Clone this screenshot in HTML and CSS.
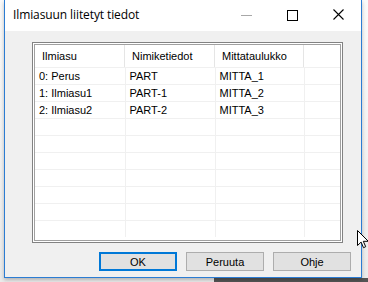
FILE: index.html
```html
<!DOCTYPE html>
<html lang="fi">
<head>
<meta charset="UTF-8" />
<title>Ilmiasuun liitetyt tiedot</title>
<link rel="stylesheet" href="styles.css">
</head>
<body>
<div class="desk">
  <div class="window">
    <div class="titlebar">
      <span class="title">Ilmiasuun liitetyt tiedot</span>
      <div class="caption">
        <span class="cap-btn min"><svg width="11" height="11" viewBox="0 0 11 11"><path d="M0 5.5h11" stroke="#a8a8a8" stroke-width="1"/></svg></span>
        <span class="cap-btn max"><svg width="11" height="11" viewBox="0 0 11 11"><rect x="0.5" y="0.5" width="10" height="10" fill="none" stroke="#000" stroke-width="1"/></svg></span>
        <span class="cap-btn close"><svg width="11" height="11" viewBox="0 0 11 11"><path d="M0.5 0.5l10 10M10.5 0.5l-10 10" stroke="#000" stroke-width="1.1"/></svg></span>
      </div>
    </div>
    <div class="client">
      <div class="listview">
        <div class="list-inner">
          <table class="grid">
            <thead>
              <tr><th>Ilmiasu</th><th>Nimiketiedot</th><th>Mittataulukko</th><th></th></tr>
            </thead>
            <tbody>
              <tr><td>0: Perus</td><td>PART</td><td>MITTA_1</td><td></td></tr>
              <tr><td>1: Ilmiasu1</td><td>PART-1</td><td>MITTA_2</td><td></td></tr>
              <tr><td>2: Ilmiasu2</td><td>PART-2</td><td>MITTA_3</td><td></td></tr>
              <tr><td></td><td></td><td></td><td></td></tr>
              <tr><td></td><td></td><td></td><td></td></tr>
              <tr><td></td><td></td><td></td><td></td></tr>
              <tr><td></td><td></td><td></td><td></td></tr>
              <tr><td></td><td></td><td></td><td></td></tr>
              <tr><td></td><td></td><td></td><td></td></tr>
              <tr><td></td><td></td><td></td><td></td></tr>
            </tbody>
          </table>
        </div>
      </div>
      <div class="buttons">
        <button class="btn default">OK</button>
        <button class="btn">Peruuta</button>
        <button class="btn">Ohje</button>
      </div>
    </div>
  </div>
  <div class="taskbar-edge"></div>
  <svg class="cursor" width="12" height="19" viewBox="0 0 12 19"><path d="M0.5 0.5v15l3.6-3.4 2.4 5.6 2.2-1-2.4-5.4h5z" fill="#fff" stroke="#000" stroke-width="1" stroke-linejoin="miter"/></svg>
</div>
</body>
</html>
```

FILE: styles.css
```css
:root {
  --win-border:#2b7cd3;
  --face:#f0f0f0;
  --grid:#f0f0f0;
  --text:#000;
  --ui:"Liberation Sans",Arial,sans-serif;
  --title:"Open Sans","Noto Sans",sans-serif;
}

html, body { margin:0; padding:0; }
body { width:368px; height:282px; overflow:hidden; background:#fff; font-family:var(--ui); color:var(--text); }

.desk { position:relative; width:368px; height:282px; background:linear-gradient(#fbfbfb,#ececec); }

.window { margin-left:4px; width:356px; height:277px; background:var(--face); border:1px solid var(--win-border); border-top:none; display:flex; flex-direction:column; box-shadow:0 2px 4px rgba(0,0,0,.25); position:relative; z-index:1; }

.titlebar { height:31px; background:#fff; display:flex; align-items:center; flex:none; }
.title { font:12px var(--title); margin-left:8px; margin-top:-2px; letter-spacing:-.1px; }
.caption { margin-left:auto; display:flex; height:100%; }
.cap-btn { width:46px; display:flex; align-items:center; justify-content:center; }
.cap-btn svg { display:block; }
.cap-btn.min svg { margin-top:0; }
.cap-btn.max svg { margin-top:-1px; }
.cap-btn.close svg { margin-top:-2px; }

.client { flex:1; display:flex; flex-direction:column; padding:11px 10px 0 27px; }

.listview { width:307px; height:197px; border:1px solid #828282; padding:1px; background:#fff; box-sizing:content-box; }
.list-inner { border:1px solid #a0a0a0; height:calc(100% - 2px); overflow:hidden; background:#fff; }

.grid { border-collapse:collapse; table-layout:fixed; width:100%; font-size:11px; }
.grid th { height:22px; padding:0 0 0 7px; text-align:left; font-weight:normal; position:relative; vertical-align:middle; }
.grid th::after { content:""; position:absolute; right:0; top:0; height:22px; width:1px; background:#e5e5e5; }
.grid th:last-child::after { display:none; }
.grid th:nth-child(1) { width:83px; }
.grid th:nth-child(2) { width:83px; }
.grid th:nth-child(3) { width:82px; }
.grid td { height:16px; padding:0 0 0 4px; border-top:1px solid var(--grid); border-right:1px solid var(--grid); white-space:nowrap; line-height:16px; }
.grid td:last-child { border-right:none; }

.buttons { display:flex; justify-content:flex-end; gap:9px; margin-top:9px; margin-right:0; margin-left:auto; }
.btn { width:78px; height:19px; box-sizing:border-box; background:#e1e1e1; border:1px solid #adadad; font:11px var(--ui); color:#000; padding:0; margin:0; }
.btn.default { border:2px solid #0078d7; }

.taskbar-edge { position:absolute; left:214px; right:0; bottom:0; height:4px; background:#555; }
.cursor { position:absolute; left:357px; top:230px; z-index:2; }
```
